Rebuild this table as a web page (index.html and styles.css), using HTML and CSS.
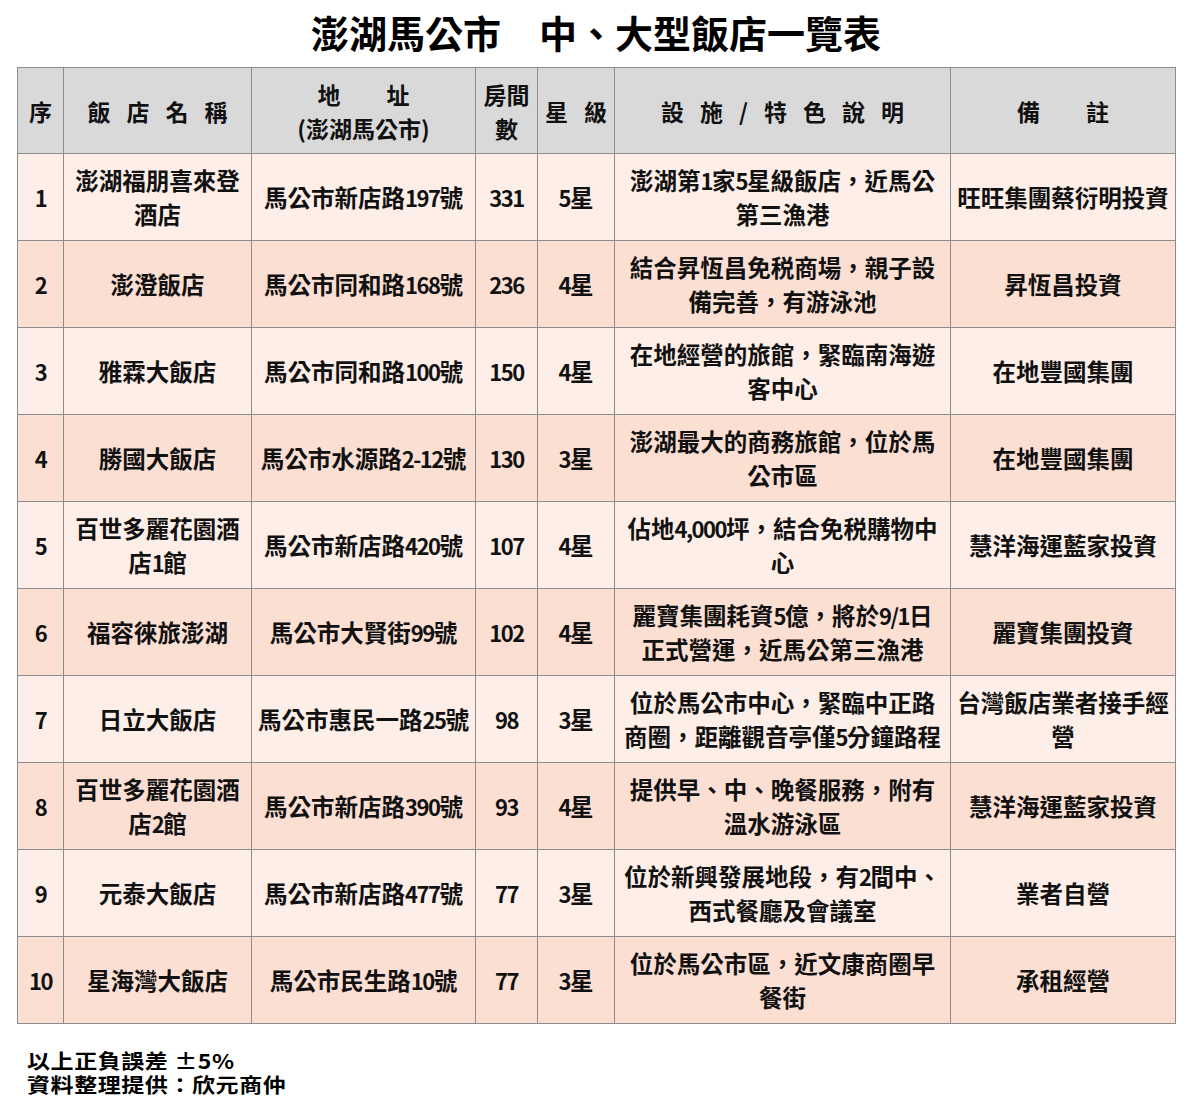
FILE: index.html
```html
<!DOCTYPE html>
<html lang="zh-Hant">
<head>
<meta charset="utf-8">
<title>澎湖馬公市 中、大型飯店一覽表</title>
<link rel="stylesheet" href="styles.css">
</head>
<body>
<div class="page">
  <h1 class="title">澎湖馬公市　中、大型飯店一覽表</h1>
  <table class="hotels">
    <colgroup>
      <col class="c-no"><col class="c-name"><col class="c-addr"><col class="c-rooms"><col class="c-star"><col class="c-desc"><col class="c-note">
    </colgroup>
    <thead>
      <tr class="head">
        <th>序</th>
        <th><span class="sp">飯店名稱</span></th>
        <th><span class="wide">地址</span><br>(澎湖馬公市)</th>
        <th>房間<br>數</th>
        <th><span class="sp">星級</span></th>
        <th><span class="sp">設施/特色說明</span></th>
        <th><span class="wide">備註</span></th>
      </tr>
    </thead>
    <tbody>
      <tr class="odd">
        <td><span class="n">1</span></td><td>澎湖福朋喜來登<br>酒店</td><td>馬公市新店路<span class="n">197</span>號</td><td><span class="n">331</span></td><td><span class="n">5</span>星</td>
        <td>澎湖第<span class="n">1</span>家<span class="n">5</span>星級飯店，近馬公<br>第三漁港</td><td>旺旺集團蔡衍明投資</td>
      </tr>
      <tr class="even">
        <td><span class="n">2</span></td><td>澎澄飯店</td><td>馬公市同和路<span class="n">168</span>號</td><td><span class="n">236</span></td><td><span class="n">4</span>星</td>
        <td>結合昇恆昌免税商場，親子設<br>備完善，有游泳池</td><td>昇恆昌投資</td>
      </tr>
      <tr class="odd">
        <td><span class="n">3</span></td><td>雅霖大飯店</td><td>馬公市同和路<span class="n">100</span>號</td><td><span class="n">150</span></td><td><span class="n">4</span>星</td>
        <td>在地經營的旅館，緊臨南海遊<br>客中心</td><td>在地豐國集團</td>
      </tr>
      <tr class="even">
        <td><span class="n">4</span></td><td>勝國大飯店</td><td>馬公市水源路<span class="n">2-12</span>號</td><td><span class="n">130</span></td><td><span class="n">3</span>星</td>
        <td>澎湖最大的商務旅館，位於馬<br>公市區</td><td>在地豐國集團</td>
      </tr>
      <tr class="odd">
        <td><span class="n">5</span></td><td>百世多麗花園酒<br>店<span class="n">1</span>館</td><td>馬公市新店路<span class="n">420</span>號</td><td><span class="n">107</span></td><td><span class="n">4</span>星</td>
        <td>佔地<span class="n">4,000</span>坪，結合免税購物中<br>心</td><td>慧洋海運藍家投資</td>
      </tr>
      <tr class="even">
        <td><span class="n">6</span></td><td>福容徠旅澎湖</td><td>馬公市大賢街<span class="n">99</span>號</td><td><span class="n">102</span></td><td><span class="n">4</span>星</td>
        <td>麗寶集團耗資<span class="n">5</span>億，將於<span class="n">9/1</span>日<br>正式營運，近馬公第三漁港</td><td>麗寶集團投資</td>
      </tr>
      <tr class="odd">
        <td><span class="n">7</span></td><td>日立大飯店</td><td>馬公市惠民一路<span class="n">25</span>號</td><td><span class="n">98</span></td><td><span class="n">3</span>星</td>
        <td>位於馬公市中心，緊臨中正路<br>商圈，距離觀音亭僅<span class="n">5</span>分鐘路程</td><td>台灣飯店業者接手經<br>營</td>
      </tr>
      <tr class="even">
        <td><span class="n">8</span></td><td>百世多麗花園酒<br>店<span class="n">2</span>館</td><td>馬公市新店路<span class="n">390</span>號</td><td><span class="n">93</span></td><td><span class="n">4</span>星</td>
        <td>提供早、中、晚餐服務，附有<br>溫水游泳區</td><td>慧洋海運藍家投資</td>
      </tr>
      <tr class="odd">
        <td><span class="n">9</span></td><td>元泰大飯店</td><td>馬公市新店路<span class="n">477</span>號</td><td><span class="n">77</span></td><td><span class="n">3</span>星</td>
        <td>位於新興發展地段，有<span class="n">2</span>間中、<br>西式餐廳及會議室</td><td>業者自營</td>
      </tr>
      <tr class="even">
        <td><span class="n">10</span></td><td>星海灣大飯店</td><td>馬公市民生路<span class="n">10</span>號</td><td><span class="n">77</span></td><td><span class="n">3</span>星</td>
        <td>位於馬公市區，近文康商圈早<br>餐街</td><td>承租經營</td>
      </tr>
    </tbody>
  </table>
  <div class="footer">
    <p>以上正負誤差 ±5%</p>
    <p>資料整理提供：欣元商仲</p>
  </div>
</div>
</body>
</html>
```

FILE: styles.css
```css
html, body {
  margin: 0;
  padding: 0;
  background: #ffffff;
}

body {
  font-family: "Noto Sans CJK TC", "Noto Sans", sans-serif;
  color: #111111;
}

.page {
  width: 1158px;
  margin-left: 17px;
}

.title {
  margin: 0;
  padding-top: 9px;
  height: 58px;
  line-height: 46px;
  text-align: center;
  font-size: 38px;
  font-weight: 700;
  color: #000;
}

.hotels {
  width: 1158px;
  border-collapse: collapse;
  table-layout: fixed;
  border: 1px solid #8c8c8c;
}

.c-no { width: 46px; }
.c-name { width: 188px; }
.c-addr { width: 224px; }
.c-rooms { width: 62px; }
.c-star { width: 77px; }
.c-desc { width: 336px; }
.c-note { width: 225px; }

.hotels th,
.hotels td {
  border: 1px solid #8c8c8c;
  padding: 0;
  text-align: center;
  vertical-align: middle;
  white-space: nowrap;
  font-weight: 700;
  line-height: 34px;
}

.hotels th {
  font-size: 23px;
  background: #d9d9d9;
  height: 85px;
  color: #111;
}

.hotels td {
  font-size: 23.5px;
  height: 86px;
}

.odd td { background: #fdeee8; }
.even td { background: #fcdfd3; }

.n {
  font-size: 22px;
  letter-spacing: -1.5px;
}

.sp {
  letter-spacing: 16px;
  margin-right: -16px;
}

.wide {
  letter-spacing: 46px;
  margin-right: -46px;
}

.footer {
  margin-top: 25px;
  margin-left: 10px;
}

.footer p {
  width: fit-content;
  margin: 0;
  font-size: 20px;
  line-height: 24px;
  font-weight: 700;
  letter-spacing: 0.5px;
  color: #000;
  white-space: nowrap;
  transform: scaleX(1.15);
  transform-origin: left center;
}
```
